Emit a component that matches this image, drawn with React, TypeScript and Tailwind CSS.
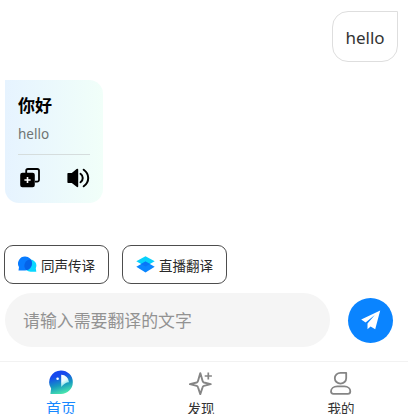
import React from "react";

const latin = "font-['Noto_Sans','Noto_Sans_CJK_SC',sans-serif]";
const cjk = "font-['Noto_Sans_CJK_SC',sans-serif]";

function CopyPlusIcon() {
  return (
    <svg width="20" height="20" viewBox="0 0 20 20" fill="none">
      <path d="M6.2 5V2.8A1.8 1.8 0 0 1 8 1H17.2A1.8 1.8 0 0 1 19 2.8V11.8A1.8 1.8 0 0 1 17.2 13.6H15" stroke="#000" strokeWidth="1.8" />
      <rect x="0.2" y="4.8" width="14.6" height="14.4" rx="2.2" fill="#000" />
      <path d="M7.5 8.9V15.1M4.4 12H10.6" stroke="#fff" strokeWidth="1.6" />
    </svg>
  );
}

function SpeakerIcon() {
  return (
    <svg width="23" height="20" viewBox="0 0 23 20" fill="none">
      <path d="M1.1 4.9H4.8L9.6 1Q11.2 0.1 11.2 1.7V18.2Q11.2 19.8 9.6 18.8L4.8 15H1.1Q0.4 15 0.4 14.3V5.6Q0.4 4.9 1.1 4.9Z" fill="#000" />
      <path d="M13.5 5.8C16.5 7.9 16.5 12.1 13.5 14.2M16.7 1.7C22.7 6 22.7 14 16.7 18.3" stroke="#000" strokeWidth="2" strokeLinecap="round" />
    </svg>
  );
}

function ChatIcon() {
  return (
    <svg width="19" height="17" viewBox="0 0 19 17">
      <path d="M12.6 3.6A6 6 0 0 1 17.8 12.2L18.3 15.8H12.6A6.1 6.1 0 0 1 12.6 3.6Z" fill="#08d7ff" />
      <path d="M7.2 0.6A6.9 6.9 0 1 1 7.2 14.4H0.5L1 11A6.9 6.9 0 0 1 7.2 0.6Z" fill="#087cff" />
      <path d="M12.7 3.6A6.9 6.9 0 0 1 8.3 14.1A6.1 6.1 0 0 1 12.7 3.6Z" fill="#0563e8" />
    </svg>
  );
}

function LayersIcon() {
  return (
    <svg width="19" height="17" viewBox="0 0 19 17">
      <path d="M9.5 0.2L18.7 5.3L9.5 10.4L0.3 5.3Z" fill="#08d1fb" />
      <path d="M9.5 5.4L18.7 10.8L9.5 16.4L0.3 10.8Z" fill="#0a86ff" />
      <path d="M9.5 5.4L14 7.9L9.5 10.4L5 7.9Z" fill="#0876f8" />
    </svg>
  );
}

function SendIcon() {
  return (
    <svg width="20" height="20" viewBox="0 0 20 20" fill="#fff">
      <path d="M19.2 0.4L0.2 9.4L4.6 12.4L13.8 5L6.5 13.4V19.3L9.6 16.6L14.2 19.2Z" />
    </svg>
  );
}

function HomeIcon() {
  return (
    <svg width="24" height="25" viewBox="0 0 24 25">
      <defs>
        <linearGradient id="homeFill" x1="8" y1="1" x2="15" y2="24" gradientUnits="userSpaceOnUse">
          <stop offset="0.2" stopColor="#1648ee" />
          <stop offset="0.6" stopColor="#169abf" />
          <stop offset="1" stopColor="#4eedac" />
        </linearGradient>
        <linearGradient id="homePie" x1="12" y1="5" x2="19" y2="17" gradientUnits="userSpaceOnUse">
          <stop stopColor="#fff" />
          <stop offset="0.45" stopColor="#e9faff" />
          <stop offset="1" stopColor="#42d5d2" />
        </linearGradient>
      </defs>
      <path d="M12 0.4A11.7 11.7 0 1 1 12 24H1.4L2.1 18.6A11.8 11.8 0 0 1 12 0.4Z" fill="url(#homeFill)" />
      <path d="M12.2 4.8A7.6 7.6 0 0 1 20 12.2Q16 12.2 12.2 17Z" fill="url(#homePie)" />
      <circle cx="8.6" cy="8.8" r="1.3" fill="#fff" />
    </svg>
  );
}

function SparkIcon() {
  return (
    <svg width="24" height="25" viewBox="0 0 24 25" fill="none" stroke="#858585" strokeLinejoin="round">
      <path d="M11.3 3.1L13.6 11.1Q13.9 12.1 14.9 12.5L21.7 14.2L14.9 15.9Q13.9 16.2 13.6 17.2L11.3 24.2L9 17.2Q8.7 16.2 7.7 15.9L0.9 14.2L7.7 12.5Q8.7 12.1 9 11.1Z" strokeWidth="1.9" />
      <path d="M19.3 2.4V9.6M15.7 6H22.9" strokeWidth="1.7" />
    </svg>
  );
}

function UserIcon() {
  return (
    <svg width="22" height="25" viewBox="0 0 22 25" fill="none" stroke="#858585" strokeWidth="1.8" strokeLinejoin="round">
      <path d="M10.5 2.8H16.2V8.2A5.7 5.4 0 1 1 10.5 2.8Z" />
      <path d="M7.3 16.4H14.3C17.9 16.4 20.3 18.6 20.3 21.3Q20.3 23.9 17.9 23.9H3.4Q1 23.9 1 21.3C1 18.6 3.6 16.4 7.3 16.4Z" />
    </svg>
  );
}

interface NavItemProps {
  label: string;
  icon: React.ReactNode;
  active?: boolean;
}

function NavItem({ label, icon, active = false }: NavItemProps) {
  return (
    <div className="flex w-10 flex-col items-center pt-2">
      {icon}
      <span className={`whitespace-nowrap ${active ? "mt-1 text-[15px] leading-[17px] text-[#1688ff]" : "mt-[5px] text-[13.5px] leading-[17px] text-[#333]"}`}>{label}</span>
    </div>
  );
}

function ModeButton({ label, icon }: { label: string; icon: React.ReactNode }) {
  return (
    <button className="flex h-[39px] w-[105px] items-center rounded-[9px] border border-[#4d4d4d] bg-white pl-[13px] text-[13.5px] text-[#292929]">
      {icon}
      <span className="ml-1 whitespace-nowrap leading-5">{label}</span>
    </button>
  );
}

export default function App() {
  return (
    <main className={`flex h-[414px] w-[408px] flex-col overflow-hidden bg-white ${cjk}`}>
      <div className="flex h-[80px] shrink-0 justify-end pt-[11px] pr-2.5">
        <div className={`flex h-[51px] w-[66px] items-center justify-center rounded-2xl rounded-tr-none border border-[#dedede] pt-0.5 text-[17px] text-[#333] ${latin}`}>
          hello
        </div>
      </div>

      <section className="ml-[5px] flex h-[123px] w-[98px] shrink-0 flex-col rounded-[14px] rounded-tl-none bg-linear-to-r from-[#e6f3ff] to-[#f1fff9] px-[13px] pt-[15px]">
        <h1 className="text-[17px] leading-5 font-bold text-black">你好</h1>
        <p className={`mt-[9px] text-[13.5px] leading-5 text-[#707574] ${latin}`}>hello</p>
        <div className="mt-[9.5px] h-px w-[72px] bg-[#d5dddd]" />
        <div className="mt-[13px] flex w-[72px] items-center justify-between pl-0.5">
          <CopyPlusIcon />
          <SpeakerIcon />
        </div>
      </section>

      <div className="mt-[42px] ml-1 flex shrink-0 gap-[13px]">
        <ModeButton label="同声传译" icon={<ChatIcon />} />
        <ModeButton label="直播翻译" icon={<LayersIcon />} />
      </div>

      <div className="mt-[9px] ml-[5px] flex shrink-0 items-center gap-[18px]">
        <input
          aria-label="请输入需要翻译的文字"
          placeholder="请输入需要翻译的文字"
          className="h-[54px] w-[325px] rounded-full bg-[#f5f5f5] pb-0.5 pl-[18px] text-[16.9px] outline-none placeholder:text-[#929292]"
        />
        <button aria-label="发送" className="flex size-[45px] items-center justify-center rounded-full bg-[#0a84ff]">
          <SendIcon />
        </button>
      </div>

      <nav className="mt-3.5 flex h-[60px] shrink-0 justify-between border-t border-[#f2f2f2] pr-[47px] pl-[41px]">
        <NavItem label="首页" icon={<HomeIcon />} active />
        <NavItem label="发现" icon={<SparkIcon />} />
        <NavItem label="我的" icon={<UserIcon />} />
      </nav>
    </main>
  );
}
